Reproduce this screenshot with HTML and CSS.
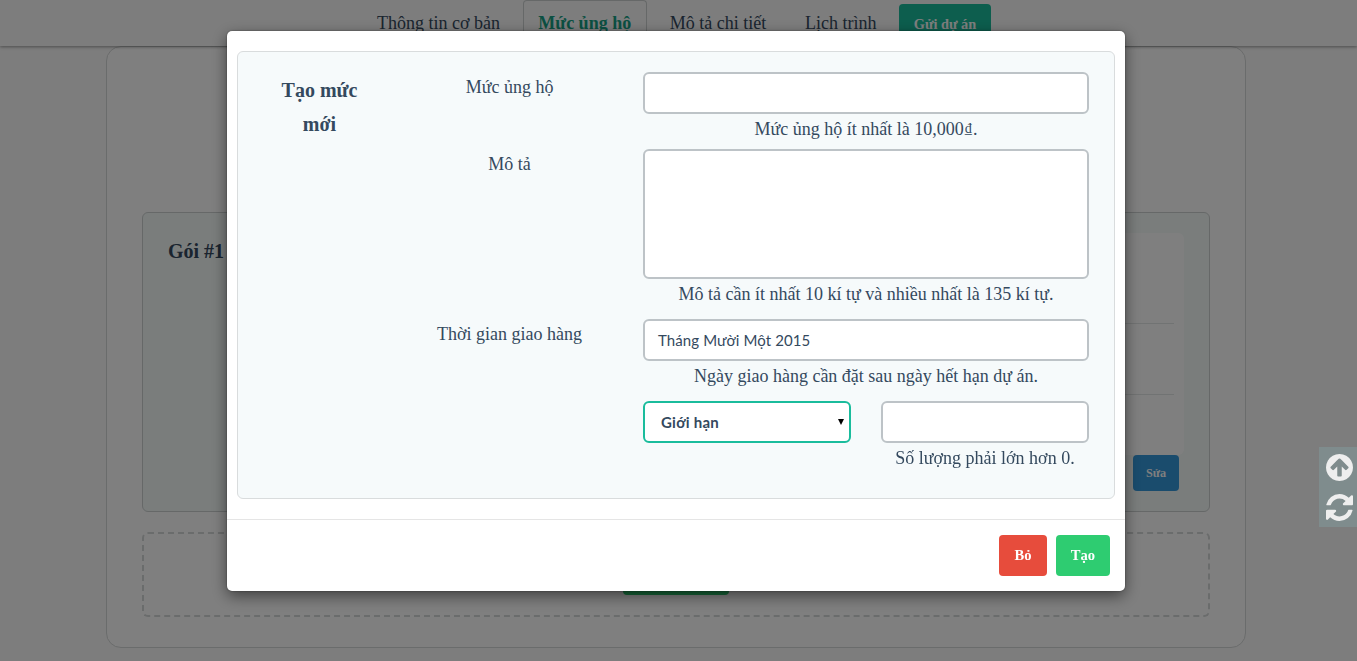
FILE: index.html
```html
<!DOCTYPE html>
<html lang="vi">
<head>
<meta charset="utf-8">
<title>Mức ủng hộ</title>
<link rel="stylesheet" href="styles.css">
</head>
<body>
<header class="topbar">
  <nav class="tabs">
    <a class="tab tab-basic">Thông tin cơ bản</a>
    <a class="tab tab-level active">Mức ủng hộ</a>
    <a class="tab tab-detail">Mô tả chi tiết</a>
    <a class="tab tab-schedule">Lịch trình</a>
    <a class="submit">Gửi dự án</a>
  </nav>
</header>
<main class="sheet">
  <section class="package">
    <h2 class="package-name">Gói #1</h2>
    <div class="package-side">
      <div class="package-info"><div class="info-row"></div><div class="info-row second"></div></div>
      <a class="edit">Sửa</a>
    </div>
  </section>
  <section class="add-area"><span class="add-button"></span></section>
</main>

<div class="overlay">
  <div class="modal">
    <div class="modal-body">
      <div class="panel">
        <h2 class="panel-title">Tạo mức<br>mới</h2>
        <div class="fields">
          <div class="row row-level">
            <label class="label">Mức ủng hộ</label>
            <div class="control">
              <div class="box"></div>
              <p class="hint">Mức ủng hộ ít nhất là 10,000<span class="dong">₫</span>.</p>
            </div>
          </div>
          <div class="row row-desc">
            <label class="label">Mô tả</label>
            <div class="control">
              <div class="box area"></div>
              <p class="hint hint-desc">Mô tả cần ít nhất 10 kí tự và nhiều nhất là 135 kí tự.</p>
            </div>
          </div>
          <div class="row row-time">
            <label class="label">Thời gian giao hàng</label>
            <div class="control">
              <div class="box">Tháng Mười Một 2015</div>
              <p class="hint">Ngày giao hàng cần đặt sau ngày hết hạn dự án.</p>
            </div>
          </div>
          <div class="row">
            <span class="label"></span>
            <div class="control pair">
              <div class="box select"><span>Giới hạn</span><svg class="caret" viewBox="0 0 6 6"><path d="M0 0h6L3 6z"/></svg></div>
              <div class="half">
                <div class="box"></div>
                <p class="hint">Số lượng phải lớn hơn 0.</p>
              </div>
            </div>
          </div>
        </div>
      </div>
    </div>
    <div class="modal-footer">
      <a class="btn cancel">Bỏ</a>
      <a class="btn create">Tạo</a>
    </div>
  </div>
</div>

<aside class="tools">
  <svg class="tool" viewBox="0 0 1536 1536"><path d="M1284 767q0-27-18-45L904 360l-91-91q-18-18-45-18t-45 18l-91 91-362 362q-18 18-18 45t18 45l91 91q18 18 45 18t45-18l189-189v502q0 26 19 45t45 19h128q26 0 45-19t19-45V714l189 189q19 19 45 19t45-19l91-91q18-18 18-45zm252 1q0 209-103 385.500T1153.500 1433 768 1536t-385.500-103T103 1153.500 0 768t103-385.500T382.500 103 768 0t385.500 103T1433 382.500 1536 768z"/></svg>
  <svg class="tool" viewBox="0 0 1536 1536"><path d="M1511 928q0 5-1 7-64 268-268 434.500T764 1536q-146 0-282.500-55T238 1324l-129 129q-19 19-45 19t-45-19-19-45V960q0-26 19-45t45-19h448q26 0 45 19t19 45-19 45l-137 137q71 66 161 102t187 36q134 0 250-65t186-179q11-17 53-117 8-23 30-23h192q13 0 22.500 9.500t9.500 22.500zm25-800v448q0 26-19 45t-45 19h-448q-26 0-45-19t-19-45 19-45l138-138Q969 256 768 256q-134 0-250 65T332 500q-11 17-53 117-8 23-30 23H50q-13 0-22.500-9.500T18 608v-7q65-268 270-434.500T768 0q146 0 284 55.500T1297 212l130-129q19-19 45-19t45 19 19 45z"/></svg>
</aside>
</body>
</html>
```

FILE: styles.css
```css
* { box-sizing: border-box; }
body {
  margin: 0;
  height: 661px;
  overflow: hidden;
  background: #fafafa;
  color: #34495e;
  font: 18px/34px "Liberation Serif", "Times New Roman", serif;
}
h2, p { margin: 0; }
.topbar {
  position: relative;
  z-index: 1;
  height: 46px;
  background: #fafafa;
  box-shadow: 0 1px 3px rgba(0, 0, 0, .38);
}
.tabs {
  display: flex;
  width: 630px;
  margin-left: 361px;
  justify-content: space-between;
  white-space: nowrap;
}
.tab { height: 46px; line-height: 46px; text-align: center; }
.tab-basic { width: 155px; }
.tab-level { width: 124px; }
.tab-detail { width: 129px; }
.tab-schedule { width: 103px; }
.active {
  border: 1px solid #ccd1d1;
  border-bottom: 0;
  border-radius: 4px 4px 0 0;
  line-height: 44px;
  color: #16a085;
  font-weight: bold;
}
.submit {
  width: 92px;
  height: 40px;
  margin-top: 4px;
  border-radius: 4px;
  background: #1abc9c;
  color: #fff;
  font-size: 14.3px;
  font-weight: bold;
  line-height: 40px;
  text-align: center;
}
.sheet {
  width: 1140px;
  height: 602px;
  margin-left: 106px;
  padding: 165px 35px 0;
  border: 1px solid #d5d8d8;
  border-radius: 15px;
  background: #fff;
}
.package {
  display: flex;
  justify-content: space-between;
  height: 300px;
  padding: 20px 25px;
  border: 1px solid #ccd1d1;
  border-radius: 6px;
  background: #f5faf9;
}
.package-name { padding-top: 1px; font-size: 20px; line-height: 34px; }
.package-side { display: flex; flex-direction: column; align-items: flex-end; width: 400px; }
.package-info { width: 395px; height: 222px; padding: 0 10px; border-radius: 6px; background: #fff; }
.info-row { height: 91px; border-bottom: 1px solid #e3e6e6; }
.info-row.second { height: 71px; }
.edit {
  width: 46px;
  height: 36px;
  margin-right: 5px;
  border-radius: 4px;
  background: #3498db;
  color: #fff;
  font-size: 12.2px;
  font-weight: bold;
  line-height: 36px;
  text-align: center;
}
.add-area {
  display: flex;
  justify-content: center;
  height: 85px;
  margin-top: 20px;
  padding-top: 20px;
  border: 2px dashed #d5d8d8;
  border-radius: 6px;
}
.add-button { width: 106px; height: 41px; border-radius: 4px; background: #2ecc71; }
.overlay {
  position: fixed;
  inset: 0;
  z-index: 2;
  padding-top: 31px;
  background: rgba(0, 0, 0, .5);
}
.modal {
  width: 898px;
  height: 560px;
  margin-left: 227px;
  border-radius: 5px;
  background: #fff;
  box-shadow: 0 5px 15px rgba(0, 0, 0, .5), 0 0 2px rgba(0, 0, 0, .45);
}
.modal-body { height: 489px; padding: 20px 10px; border-bottom: 1px solid #e5e5e5; }
.panel {
  display: flex;
  height: 448px;
  padding: 20px 25px 0 15px;
  border: 1px solid #d9dcdd;
  border-radius: 6px;
  background: #f6fafb;
}
.panel-title { width: 133px; padding-top: 1px; font-size: 20px; line-height: 34px; text-align: center; }
.fields { width: 703px; }
.row { display: flex; height: 82px; }
.row-level { height: 77px; }
.row-desc { height: 170px; }
.label { width: 257px; padding-right: 10px; line-height: 30px; text-align: center; }
.control { width: 446px; }
.box {
  height: 42px;
  padding: 0 13px;
  border: 2px solid #bdc3c7;
  border-radius: 6px;
  background: #fff;
  font: 15px/39px Lato, sans-serif;
  letter-spacing: .1px;
}
.area { height: 130px; }
.hint { line-height: 30px; text-align: center; white-space: nowrap; }
.dong { padding: 0 1px; font-size: 14px; line-height: 1; vertical-align: 2px; }
.pair { display: flex; justify-content: space-between; }
.half { width: 208px; }
.select {
  display: flex;
  justify-content: space-between;
  width: 208px;
  padding: 0 5px 0 16px;
  border-color: #1abc9c;
  font-weight: bold;
  letter-spacing: .25px;
}
.caret { width: 6px; height: 6px; margin-top: 16px; }
.modal-footer { display: flex; justify-content: flex-end; gap: 9px; padding: 15px; }
.btn {
  height: 41px;
  border-radius: 4px;
  color: #fff;
  font-size: 14.6px;
  font-weight: bold;
  line-height: 41px;
  text-align: center;
}
.cancel { width: 48px; background: #e74c3c; }
.create { width: 54px; background: #2ecc71; }
.tools {
  position: fixed;
  top: 447px;
  right: 0;
  z-index: 3;
  display: flex;
  flex-direction: column;
  gap: 13px;
  width: 38px;
  height: 80px;
  padding: 7px 4px 6px 7px;
  background: #7f8c8d;
}
.tool { width: 27px; height: 27px; fill: #eee; }
```
